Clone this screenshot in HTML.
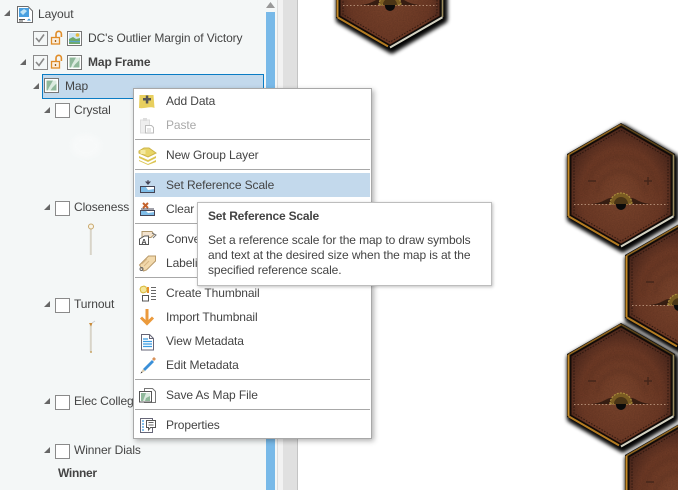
<!DOCTYPE html>
<html><head><meta charset="utf-8"><style>
html,body{margin:0;padding:0;width:678px;height:490px;overflow:hidden;background:#fff}
body{position:relative;font-family:"Liberation Sans",sans-serif;font-size:12px;color:#444}
.a{position:absolute}
.t{position:absolute;white-space:nowrap;line-height:16px;height:16px;letter-spacing:-.1px}
.cb{position:absolute;width:13px;height:13px;border:1px solid #8a8a8a;background:#fff}
.sep{position:absolute;left:135px;width:235px;height:1px;background:#a8a8a8}
svg{position:absolute;overflow:hidden}
</style></head><body>
<svg style="left:0;top:0;z-index:0" width="678" height="490" viewBox="0 0 678 490">
<defs>
<radialGradient id="lg" cx="50%" cy="58%" r="62%"><stop offset="0" stop-color="#7a442c"/><stop offset=".65" stop-color="#6c3925"/><stop offset="1" stop-color="#43231a"/></radialGradient>
<filter id="bl" x="-20%" y="-20%" width="140%" height="140%"><feGaussianBlur stdDeviation="2"/></filter>
<filter id="ns" x="0" y="0" width="100%" height="100%"><feTurbulence type="fractalNoise" baseFrequency=".8" numOctaves="2" seed="4"/><feColorMatrix values="0 0 0 0 0 0 0 0 0 0 0 0 0 0 0 .9 0 0 0 -.25"/><feComposite in2="SourceGraphic" operator="in"/></filter>
<g id="hex">
<path d="M54 -1 109 31V95L54 127 -1 95V31Z" fill="#000" filter="url(#bl)" transform="translate(1.500 2)"/>
<path d="M54 -1 109 31V95L54 127 -1 95V31Z" fill="#000" opacity=".7" filter="url(#bl)" transform="translate(2 2.500)"/>
<path d="M54 0 108 31V94L54 125 0 94V31Z" fill="#0c0c0c"/>
<path d="M1.500 31.800 54 1.500" stroke="#8f641f" stroke-width="1.600" fill="none"/>
<path d="M54 1.500 106.500 31.800" stroke="#5a4218" stroke-width="1.600" fill="none"/>
<path d="M106.500 31.800V93" stroke="#9a8a5c" stroke-width="1.600" fill="none"/>
<path d="M1.500 31.800V93.200" stroke="#c68a26" stroke-width="2" fill="none"/>
<path d="M1.500 93.200 52 122.400" stroke="#b57c22" stroke-width="2" fill="none"/>
<path d="M54 123.500 106.500 93.200" stroke="#d4d2c2" stroke-width="2" fill="none"/>
<path d="M54 4 104 33V92L54 121 4 92V33Z" fill="url(#lg)" stroke="#170b06" stroke-width="1"/>
<path d="M54 4 104 33V92L54 121 4 92V33Z" fill="#000" filter="url(#ns)" opacity=".22"/>
<path d="M54 7 101 34.500V90.500L54 118 7 90.500V34.500Z" fill="none" stroke="#1a0d08" stroke-width="1" stroke-dasharray="1.500 1.500" opacity=".7"/>
<path d="M18 70C22 44 40 34 54 34 70 34 86 44 91 70" fill="none" stroke="#3a1b12" stroke-width="4" opacity=".13" filter="url(#bl)"/>
<path d="M30 70C32 56 42 48 54 48 66 48 76 56 79 70" fill="none" stroke="#3a1b12" stroke-width="4" opacity=".16" filter="url(#bl)"/>
<path d="M21 58h8" stroke="#45261a" stroke-width="1.500"/>
<path d="M77 58h8M81 54v8" stroke="#45261a" stroke-width="1.500"/>
<path d="M24 81C36 80 38 76 43 75H65C70 76 72 80 84 81Z" fill="#1e0f08" opacity=".7"/>
<path d="M43 81A11 11 0 0 1 65 81Z" fill="#7a5c22" stroke="#a98a3c" stroke-width="1.200" stroke-dasharray="2 1.200"/>
<path d="M47 81A7 7 0 0 1 61 81Z" fill="#4b3516"/>
<path d="M50 82A4 4 0 0 0 58 82Z" fill="#0a0a0a" stroke="#0a0a0a" stroke-width="2"/>
<path d="M7 81.500H46M62 81.500H101" stroke="#b08a72" stroke-width="1" stroke-dasharray="1.500 2"/>
</g>
</defs>
<use href="#hex" x="336" y="-76"/>
<use href="#hex" x="567" y="123"/>
<use href="#hex" x="625" y="224"/>
<use href="#hex" x="567" y="323"/>
<use href="#hex" x="625" y="424"/>
</svg>

<div class="a" style="left:0;top:0;width:266px;height:490px;background:#f4f7f7"></div>
<div class="a" style="left:266px;top:0;width:11px;height:490px;background:#f4f7f7"></div>
<div class="a" style="left:266px;top:12px;width:9px;height:478px;background:#78b9e8"></div>
<div class="a" style="left:277px;top:0;width:6px;height:490px;background:#f2f2f2;border-left:1px solid #dcdcdc;box-sizing:border-box"></div>
<div class="a" style="left:283px;top:0;width:14px;height:490px;background:#e0e0e0;border-right:1px solid #c4c4c4;box-sizing:content-box"></div>

<svg style="left:0;top:0" width="300" height="490" viewBox="0 0 300 490">
<path d="M270.500 2 275 8H266Z" fill="#999"/>
<path d="M10 10V16H4Z" fill="#666"/><path d="M26 59V65H20Z" fill="#666"/><path d="M39 83V89H33Z" fill="#666"/><path d="M50 107V113H44Z" fill="#666"/><path d="M50 204V210H44Z" fill="#666"/><path d="M50 301V307H44Z" fill="#666"/><path d="M50 398V404H44Z" fill="#666"/><path d="M50 447V453H44Z" fill="#666"/>
<path d="M17.500 6.500H28L32.500 11V22.500H17.500Z" fill="#fff" stroke="#6c6c6c"/><rect x="19" y="8" width="10" height="9" fill="#4aa0e0"/><path d="M20 12l4-3 3 2-4 4z" fill="#bfe3f5"/><path d="M19 19.500h6M19 21h4" stroke="#555"/><path d="M29 18.500l2 2h-4z" fill="#3a8fd0"/>
<path d="M36 38l3 3.500 5-7" fill="none" stroke="#888" stroke-width="1.600"/>
<path d="M36 62l3 3.500 5-7" fill="none" stroke="#888" stroke-width="1.600"/>
<g id="lk"><rect x="51.500" y="37.500" width="8" height="6.500" fill="#fbeedd" stroke="#e08c28" stroke-width="1.300"/><path d="M56 37.500V34a2.700 2.700 0 0 1 5.400 0V37" fill="none" stroke="#e08c28" stroke-width="1.600"/><path d="M55.500 40v2" stroke="#9c6018" stroke-width="1.300"/></g>
<use href="#lk" y="24"/>
<rect x="67.500" y="31.500" width="14" height="14" fill="#fff" stroke="#777"/><rect x="69" y="33" width="11" height="6" fill="#cfe6f5"/><circle cx="77.500" cy="35" r="1.800" fill="#e8b93a"/><path d="M69 39l4-2 3 2 4-1v6H69Z" fill="#6fa86a"/><path d="M69 41.500c3-1 7 1 11 0" stroke="#5aa6d8" fill="none"/>
<rect x="67.500" y="55.500" width="14" height="14" fill="#fff" stroke="#777"/><rect x="69.500" y="57.500" width="10" height="10" fill="#8fb89a"/><path d="M76 57.500l3 0 0 3-4 4-2 3h-2l1-3z" fill="#dcebe0"/>
</svg>

<div class="a" style="left:42px;top:74px;width:220px;height:23px;background:#c3d9ec;border:1px solid #0a7cc4"></div>

<svg style="left:0;top:0" width="300" height="490" viewBox="0 0 300 490">
<rect x="44.500" y="78.500" width="14" height="14" fill="#fff" stroke="#777"/><rect x="46.500" y="80.500" width="10" height="10" fill="#8fb89a"/><path d="M53 80.500l3.500 0 0 3-4 4-2 3h-3l1.500-3z" fill="#dcebe0"/>
<ellipse cx="86" cy="146" rx="15" ry="12" fill="#fff" opacity=".3" filter="url(#bl)"/>
<path d="M90.800 229V255" stroke="#d8d4c8" stroke-width="2"/><circle cx="91" cy="226.500" r="2.500" fill="#f8f4e8" stroke="#c9a76a"/>
<path d="M90.800 324V352" stroke="#d8d4c8" stroke-width="2"/><path d="M89 323l3.500 0-1.500 3.500z" fill="#c98a38"/><path d="M92 323l3-2" stroke="#ccc"/><circle cx="91" cy="352" r="1" fill="#c9a76a"/>
</svg>

<div class="cb" style="left:33px;top:31px;background:transparent"></div>
<div class="cb" style="left:33px;top:55px;background:transparent"></div>
<div class="cb" style="left:55px;top:103px"></div>
<div class="cb" style="left:55px;top:201px"></div>
<div class="cb" style="left:55px;top:298px"></div>
<div class="cb" style="left:55px;top:395px"></div>
<div class="cb" style="left:55px;top:444px"></div>

<div class="t" style="left:38px;top:6px">Layout</div>
<div class="t" style="left:88px;top:30px">DC's Outlier Margin of Victory</div>
<div class="t" style="left:88px;top:54px;font-weight:bold">Map Frame</div>
<div class="t" style="left:65px;top:78px">Map</div>
<div class="t" style="left:74px;top:102px">Crystal</div>
<div class="t" style="left:74px;top:199px">Closeness</div>
<div class="t" style="left:74px;top:296px">Turnout</div>
<div class="t" style="left:74px;top:393px">Elec College</div>
<div class="t" style="left:74px;top:442px">Winner Dials</div>
<div class="t" style="left:58px;top:465px;font-weight:bold;letter-spacing:-.3px">Winner</div>

<div class="a" style="left:133px;top:88px;width:237px;height:349px;background:#fff;border:1px solid #a8a8a8;box-shadow:2px 2px 5px rgba(0,0,0,.3)"></div>
<div class="a" style="left:135px;top:173px;width:235px;height:24px;background:#c3d9ec"></div>
<div class="sep" style="top:139px"></div><div class="sep" style="top:169px"></div><div class="sep" style="top:223px"></div><div class="sep" style="top:277px"></div><div class="sep" style="top:379px"></div><div class="sep" style="top:409px"></div>

<div class="t" style="left:166px;top:93px">Add Data</div>
<div class="t" style="left:166px;top:117px;color:#aaa">Paste</div>
<div class="t" style="left:166px;top:147px">New Group Layer</div>
<div class="t" style="left:166px;top:177px">Set Reference Scale</div>
<div class="t" style="left:166px;top:201px">Clear</div>
<div class="t" style="left:166px;top:231px">Convert</div>
<div class="t" style="left:166px;top:255px">Labeling</div>
<div class="t" style="left:166px;top:285px">Create Thumbnail</div>
<div class="t" style="left:166px;top:309px">Import Thumbnail</div>
<div class="t" style="left:166px;top:333px">View Metadata</div>
<div class="t" style="left:166px;top:357px">Edit Metadata</div>
<div class="t" style="left:166px;top:387px">Save As Map File</div>
<div class="t" style="left:166px;top:417px">Properties</div>

<svg style="left:0;top:0" width="678" height="490" viewBox="0 0 678 490">
<path d="M139.500 95h14l1 13c-5-2-10 1-15.500 0z" fill="#e8cf5e"/><path d="M143 98h8v2.500h-8zM145.800 95.500h2.500v8h-2.500z" fill="#555"/>
<path d="M140.500 120h9v13h-9z" fill="#eee" stroke="#ddd"/><rect x="143" y="118" width="4" height="3" fill="#ddd"/><path d="M145.500 125.500h6l2 2v5.500h-8z" fill="#fff" stroke="#bbb"/><path d="M147 129h4M147 131h4" stroke="#ccc"/>
<path d="M139 151l5-3h5l7 5-8 4-9-4z" fill="#e8d468" stroke="#cdb448"/><path d="M140.500 150h5v4h-5z" fill="#f4e9a0"/><path d="M139 156l9 4 8-4v2l-8 4-9-4zM139 160l9 4 8-4v2l-8 3-9-4z" fill="#dcc552"/>
<rect x="140.500" y="186.500" width="14" height="6" fill="#fff" stroke="#445"/><path d="M141 187h5l2 3 6-1v3h-13z" fill="#7fbde8"/><path d="M145 181.500h6l-3 3.500z" fill="#445"/><path d="M148 180v2" stroke="#445"/>
<rect x="140.500" y="210.500" width="14" height="5" fill="#fff" stroke="#445"/><path d="M141 211h5l2 2 6-1v3h-13z" fill="#7fbde8"/><path d="M143 203l5 5M148 203l-5 5" stroke="#c4622c" stroke-width="2"/><path d="M141 209h13" stroke="#445"/>
<path d="M142 231.500h10l2 3-3 3h-9z" fill="#f4e4cf" stroke="#b0986c"/><path d="M152 233l4 2-3 3" fill="none" stroke="#777"/><path d="M139.500 239l5-3 4 0v8.500h-9z" fill="#fff" stroke="#555"/><text x="141.500" y="244" font-size="7" font-weight="bold" fill="#444" font-family="Liberation Sans">A</text>
<path d="M139.500 265l9-9 7 0 0 5-9 9-3 1z" fill="#f2d9ac" stroke="#b99a6a"/><path d="M142 264l5-5M144 266l5-5" stroke="#d8b886"/><circle cx="141.500" cy="269" r="1.500" fill="none" stroke="#666"/>
<path d="M141 287l3-1 2 1 1 3-1 2-3 1-2-1-1-3z" fill="#f4e69a" stroke="#d8b93c"/><rect x="147" y="287" width="2" height="6" fill="#e58f2c"/><path d="M151 287.500h5M151 290.500h5M151 293.500h5M151 296.500h5M151 299.500h5" stroke="#666"/><rect x="142.500" y="295.500" width="6" height="5.500" fill="#fff" stroke="#555"/>
<path d="M147 309v14M141 317.500l6 6 6-6" fill="none" stroke="#eb9a3c" stroke-width="3"/>
<path d="M141.500 334.500h8l4 4v11.500h-12z" fill="#fff" stroke="#667"/><path d="M143 339h5M143 341.500h9M143 344h9M143 346.500h9" stroke="#3a9ae0" stroke-width="1.200"/><path d="M149.500 334.500v4h4" fill="none" stroke="#667"/>
<path d="M143 369l9-9 2 2-9 9z" fill="#3a8fd8"/><path d="M152 359l2-2 2 2-2 2z" fill="#d8925a"/><path d="M143 369l-2.500 4.500 4.500-2.500z" fill="#d8c8a8"/><path d="M140.500 373.500l1-2 1 1z" fill="#333"/>
<path d="M144.500 388.500h8l3 3v11h-11z" fill="#fff" stroke="#777"/><rect x="139.500" y="391.500" width="12" height="10.500" fill="#fff" stroke="#555"/><rect x="141" y="393" width="9" height="8" fill="#8fb89a"/><path d="M146 393l4 0 0 3-4 2-1 3h-2z" fill="#dcebe0"/>
<rect x="140.500" y="418.500" width="12" height="14" fill="#fff" stroke="#667"/><path d="M142 421h2M142 424h2M142 427h2M142 430h2" stroke="#3a9ae0" stroke-width="1.200"/><path d="M146.500 420.500h9v7h-5l-2 2.500v-2.500h-2z" fill="#fff" stroke="#555"/><path d="M148.500 422.500h5M148.500 425h5" stroke="#666"/>
</svg>

<div class="a" style="left:197px;top:202px;width:293px;height:82px;background:#fff;border:1px solid #bdbdbd;box-shadow:1px 1px 3px rgba(0,0,0,.25)"></div>
<div class="t" style="left:208px;top:208px;font-weight:bold;letter-spacing:-.2px">Set Reference Scale</div>
<div class="t" style="left:208px;top:232px">Set a reference scale for the map to draw symbols</div>
<div class="t" style="left:208px;top:247px">and text at the desired size when the map is at the</div>
<div class="t" style="left:208px;top:262px">specified reference scale.</div>
</body></html>
